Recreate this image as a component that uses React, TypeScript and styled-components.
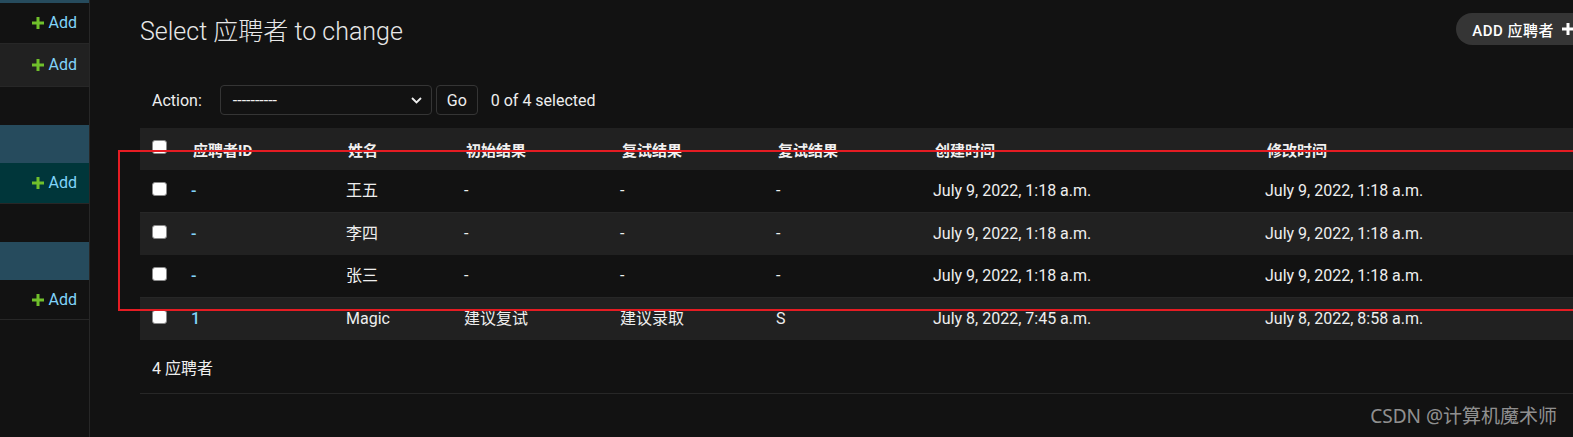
import styled, { createGlobalStyle } from "styled-components";

const GlobalStyle = createGlobalStyle`
  html, body {
    margin: 0;
    padding: 0;
    background: #121212;
  }
  body {
    font-family: Roboto, "Noto Sans CJK SC", sans-serif;
    color: #eeeeee;
  }
`;

type Row = {
  id: string;
  name: string;
  first: string;
  second: string;
  third: string;
  created: string;
  modified: string;
};

const rows: Row[] = [
  { id: "-", name: "王五", first: "-", second: "-", third: "-", created: "July 9, 2022, 1:18 a.m.", modified: "July 9, 2022, 1:18 a.m." },
  { id: "-", name: "李四", first: "-", second: "-", third: "-", created: "July 9, 2022, 1:18 a.m.", modified: "July 9, 2022, 1:18 a.m." },
  { id: "-", name: "张三", first: "-", second: "-", third: "-", created: "July 9, 2022, 1:18 a.m.", modified: "July 9, 2022, 1:18 a.m." },
  { id: "1", name: "Magic", first: "建议复试", second: "建议录取", third: "S", created: "July 8, 2022, 7:45 a.m.", modified: "July 8, 2022, 8:58 a.m." },
];

const headers = ["应聘者ID", "姓名", "初始结果", "复试结果", "复试结果", "创建时间", "修改时间"];

const PlusIcon = ({ color, size }: { color: string; size: number }) => (
  <svg width={size} height={size} viewBox="0 0 12 12">
    <path d="M4.5 0h3v4.5H12v3H7.5V12h-3V7.5H0v-3h4.5z" fill={color} />
  </svg>
);

const AddLink = () => (
  <AddText>
    <PlusIcon color="#70bf2b" size={12} />
    <span>Add</span>
  </AddText>
);

export default function App() {
  return (
    <>
      <GlobalStyle />
      <Page>
        <Sidebar>
          <Module>
            <Caption $h={3} />
            <SideRow>
              <AddLink />
            </SideRow>
            <SideRow $alt $h={42}>
              <AddLink />
            </SideRow>
          </Module>
          <Module>
            <Caption $h={38} />
            <SideRow $selected>
              <AddLink />
            </SideRow>
          </Module>
          <Module>
            <Caption $h={38} />
            <SideRow $h={39}>
              <AddLink />
            </SideRow>
          </Module>
        </Sidebar>

        <Main>
          <Content>
            <TitleRow>
              <Title>Select 应聘者 to change</Title>
              <ToolButton>
                ADD 应聘者
                <PlusIcon color="#ffffff" size={12} />
              </ToolButton>
            </TitleRow>

            <Actions>
              <span>Action:</span>
              <Select>
                <span>----------</span>
                <svg width="11" height="7" viewBox="0 0 11 7">
                  <path d="M1 1l4.5 4.5L10 1" stroke="#eeeeee" strokeWidth="1.8" fill="none" />
                </svg>
              </Select>
              <GoButton>Go</GoButton>
              <Counter>0 of 4 selected</Counter>
            </Actions>

            <Table>
              <HeadRow>
                <CheckCell>
                  <Check />
                </CheckCell>
                {headers.map((h, i) => (
                  <HeadCell key={i}>{h}</HeadCell>
                ))}
              </HeadRow>
              {rows.map((r, i) => (
                <BodyRow key={i} $alt={i % 2 === 1}>
                  <CheckCell>
                    <Check />
                  </CheckCell>
                  <Cell $link>{r.id}</Cell>
                  <Cell>{r.name}</Cell>
                  <Cell>{r.first}</Cell>
                  <Cell>{r.second}</Cell>
                  <Cell>{r.third}</Cell>
                  <Cell>{r.created}</Cell>
                  <Cell>{r.modified}</Cell>
                </BodyRow>
              ))}
            </Table>

            <Paginator>4 应聘者</Paginator>
          </Content>
        </Main>

        <Highlight />
        <Watermark>CSDN @计算机魔术师</Watermark>
      </Page>
    </>
  );
}

const Page = styled.div`
  position: relative;
  display: flex;
  width: 1573px;
  height: 437px;
  overflow: hidden;
  background: #121212;
`;

const Sidebar = styled.div`
  width: 89px;
  flex-shrink: 0;
  border-right: 1px solid #272727;
  display: flex;
  flex-direction: column;
  gap: 38px;
`;

const Module = styled.div`
  display: flex;
  flex-direction: column;
`;

const Caption = styled.div<{ $h: number }>`
  height: ${(p) => p.$h}px;
  background: #264b5d;
`;

const SideRow = styled.div<{ $alt?: boolean; $selected?: boolean; $h?: number }>`
  height: ${(p) => p.$h ?? 40}px;
  border-bottom: 1px solid #272727;
  background: ${(p) => (p.$selected ? "#00363a" : p.$alt ? "#212121" : "#121212")};
  display: flex;
  align-items: center;
  justify-content: flex-end;
  padding-right: 12px;
`;

const AddText = styled.a`
  display: flex;
  align-items: center;
  gap: 5px;
  font-size: 16px;
  line-height: 1;
  color: #81d4fa;
`;

const Main = styled.div`
  flex: 1;
  overflow: hidden;
  padding-left: 50px;
`;

const Content = styled.div`
  width: 1450px;
`;

const TitleRow = styled.div`
  display: flex;
  align-items: center;
  justify-content: space-between;
  padding-top: 13px;
  height: 32px;
`;

const Title = styled.h1`
  margin: 0;
  font-size: 25px;
  font-weight: 300;
  color: #e8e8e8;
`;

const ToolButton = styled.a`
  display: flex;
  align-items: center;
  gap: 8px;
  height: 32px;
  padding: 0 16px 0 16px;
  border-radius: 16px;
  background: #353535;
  color: #ffffff;
  font-size: 15px;
  font-weight: 500;
  letter-spacing: 0.5px;
  text-transform: uppercase;
`;

const Actions = styled.div`
  display: flex;
  align-items: center;
  margin-top: 40px;
  height: 30px;
  padding-left: 12px;
  font-size: 16px;
  color: #eeeeee;
`;

const Select = styled.div`
  box-sizing: border-box;
  margin-left: 18px;
  width: 212px;
  height: 30px;
  padding: 0 9px 0 12px;
  border: 1px solid #353535;
  border-radius: 4px;
  display: flex;
  align-items: center;
  justify-content: space-between;
  font-size: 16px;
`;

const GoButton = styled.div`
  box-sizing: border-box;
  margin-left: 4px;
  height: 30px;
  width: 42px;
  border: 1px solid #353535;
  border-radius: 4px;
  display: flex;
  align-items: center;
  justify-content: center;
`;

const Counter = styled.span`
  margin-left: 13px;
`;

const Table = styled.div`
  margin-top: 13px;
`;

const columns = "41px 155px 118px 156px 156px 157px 332px 1fr";

const HeadRow = styled.div`
  display: grid;
  grid-template-columns: ${columns};
  height: 42px;
  background: #212121;
`;

const BodyRow = styled.div<{ $alt: boolean }>`
  display: grid;
  grid-template-columns: ${columns};
  height: 42px;
  border-top: ${(p) => (p.$alt ? "1px solid #272727" : "none")};
  background: ${(p) => (p.$alt ? "#212121" : "#121212")};
`;

const CheckCell = styled.div`
  padding: 12px 0 0 12px;
`;

const Check = styled.div`
  box-sizing: border-box;
  width: 15px;
  height: 14px;
  background: #ffffff;
  border: 1px solid #8a8a8a;
  border-radius: 3px;
`;

const HeadCell = styled.div`
  display: flex;
  align-items: center;
  padding-left: 12px;
  font-size: 15px;
  font-weight: 700;
  color: #f0f0f0;
  white-space: nowrap;
`;

const Cell = styled.div<{ $link?: boolean }>`
  display: flex;
  align-items: center;
  padding-left: 10px;
  font-size: 16px;
  line-height: 1;
  white-space: nowrap;
  color: ${(p) => (p.$link ? "#81d4fa" : "#eeeeee")};
  font-weight: ${(p) => (p.$link ? 500 : 400)};
`;

const Paginator = styled.div`
  height: 53px;
  display: flex;
  align-items: center;
  padding-left: 12px;
  font-size: 16px;
  border-bottom: 1px solid #272727;
`;

const Highlight = styled.div`
  position: absolute;
  left: 118px;
  top: 150px;
  width: 1500px;
  height: 157px;
  border: 2px solid #e51c23;
  pointer-events: none;
`;

const Watermark = styled.div`
  position: absolute;
  right: 16px;
  top: 401px;
  font-size: 19px;
  color: rgba(255, 255, 255, 0.55);
  font-family: "Noto Sans", "Noto Sans CJK SC", sans-serif;
`;
